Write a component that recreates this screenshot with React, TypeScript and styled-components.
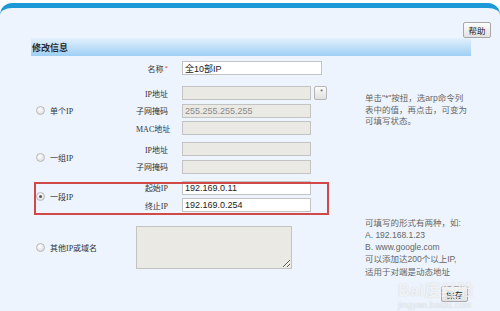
import React from 'react';
import styled, { createGlobalStyle, css } from 'styled-components';

const Global = createGlobalStyle`
  html, body { margin: 0; padding: 0; background: #ffffff; }
  body {
    width: 500px;
    height: 311px;
    overflow: hidden;
    font-family: "Liberation Sans", "Noto Sans CJK SC", sans-serif;
  }
`;

const Panel = styled.div`
  position: relative;
  margin-top: 3px;
  height: 308px;
  box-sizing: border-box;
  background: #edf4fd;
  border-top: 5px solid #1b98d6;
  border-radius: 12px 12px 0 0;
`;

const Toolbar = styled.div`
  display: flex;
  justify-content: flex-end;
  padding: 14px 9px 0 0;
`;

const Btn = styled.button<{ $w: number }>`
  width: ${p => p.$w}px;
  height: 16px;
  padding: 0;
  box-sizing: border-box;
  border: 1px solid #a8a8a8;
  border-radius: 2px;
  background: linear-gradient(#fdfdfd, #e2e2e2);
  font-family: "Noto Sans CJK SC", sans-serif;
  font-size: 8.5px;
  color: #222;
  line-height: 14px;
`;

const SectionBar = styled.div`
  margin: 0 29px 0 31px;
  height: 18px;
  display: flex;
  align-items: center;
  padding-left: 1px;
  background: linear-gradient(#e4f1fc, #9ecff5);
  font-family: "Noto Sans CJK SC", sans-serif;
  font-size: 9px;
  font-weight: 700;
  color: #2a2a2a;
`;

const Form = styled.div`
  display: flex;
  flex-direction: column;
  padding-left: 34px;
`;

const Group = styled.div<{ $mt: number; $highlight?: boolean }>`
  position: relative;
  display: flex;
  align-items: center;
  margin-top: ${p => p.$mt}px;
  ${p =>
    p.$highlight &&
    css`
      &::after {
        content: '';
        position: absolute;
        left: 0;
        top: 1px;
        width: 295px;
        height: 33px;
        box-sizing: border-box;
        border: 2px solid #d04848;
        pointer-events: none;
      }
    `}
`;

const Choice = styled.div`
  width: 102px;
  box-sizing: border-box;
  padding-left: 2px;
  display: flex;
  align-items: center;
  gap: 5px;
  font-size: 8px;
  color: #333;
  font-family: "Liberation Serif", "Noto Sans CJK SC", serif;
`;

const Radio = styled.span<{ $checked?: boolean }>`
  position: relative;
  width: 9px;
  height: 9px;
  box-sizing: border-box;
  border-radius: 50%;
  border: 1px solid #b9b9b9;
  background: radial-gradient(circle at 40% 35%, #ffffff, #d4d4d4);
  ${p =>
    p.$checked &&
    css`
      &::after {
        content: '';
        position: absolute;
        left: 2px;
        top: 2px;
        width: 3px;
        height: 3px;
        border-radius: 50%;
        background: #555;
      }
    `}
`;

const Fields = styled.div`
  width: 229px;
  display: flex;
  flex-direction: column;
  gap: 3.5px;
`;

const FieldRow = styled.div`
  display: flex;
  align-items: center;
`;

const Label = styled.span`
  width: 32px;
  margin-right: 14px;
  text-align: right;
  white-space: nowrap;
  font-family: "Liberation Serif", "Noto Sans CJK SC", serif;
  font-size: 8px;
  color: #333;
`;

const Req = styled.sup`
  color: #e03a3a;
  font-size: 7px;
  margin-left: 1px;
  vertical-align: 2px;
  line-height: 0;
`;

const Input = styled.input<{ $w?: number; $disabled?: boolean }>`
  width: ${p => p.$w ?? 129}px;
  height: 14px;
  margin: 0;
  padding: 0 2px;
  box-sizing: border-box;
  border: 1px solid #c3c3c3;
  background: ${p => (p.$disabled ? '#ebe9e3' : '#ffffff')};
  color: ${p => (p.$disabled ? '#8a8a8a' : '#222')};
  font-family: "Liberation Sans", "Noto Sans CJK SC", sans-serif;
  font-size: 9px;
  outline: none;
`;

const PickBtn = styled.span`
  margin-left: 3px;
  width: 13px;
  height: 14px;
  box-sizing: border-box;
  border: 1px solid #b5b5b5;
  border-radius: 2px;
  background: linear-gradient(#fbfbfb, #e0e0e0);
  display: flex;
  justify-content: flex-end;
  padding: 1px 3px 0 0;
  font-size: 7px;
  line-height: 7px;
  color: #555;
  margin-top: -1px;
`;

const TextArea = styled.textarea`
  width: 156px;
  height: 43px;
  margin: 0;
  box-sizing: border-box;
  border: 1px solid #c3c3c3;
  background: #ebe9e3;
  outline: none;
`;

const Help = styled.div<{ $lh: number }>`
  width: 125px;
  font-family: "Liberation Sans", "Noto Sans CJK SC", sans-serif;
  font-size: 8.5px;
  line-height: ${p => p.$lh}px;
  color: #666;
`;

const Footer = styled.div`
  display: flex;
  justify-content: flex-end;
  padding-right: 32px;
  margin-top: 8px;
`;

const Watermark = styled.div`
  position: absolute;
  left: 398px;
  top: 274px;
  display: flex;
  flex-direction: column;
  align-items: flex-start;
  color: rgba(255, 255, 255, 0.75);
  text-shadow: 0 0 1px rgba(130, 130, 130, 0.4);
  pointer-events: none;
`;

const WmLogo = styled.span`
  font-family: "Liberation Sans", "Noto Sans CJK SC", sans-serif;
  font-weight: 700;
  font-size: 16px;
  line-height: 18px;
  letter-spacing: 0.5px;
`;

const WmUrl = styled.span`
  font-family: "Liberation Sans", sans-serif;
  font-size: 8.5px;
  line-height: 10px;
  letter-spacing: 0.3px;
  color: rgba(255, 255, 255, 0.55);
`;

export default function App() {
  return (
    <>
      <Global />
      <Panel>
        <Toolbar>
          <Btn $w={28}>帮助</Btn>
        </Toolbar>
        <SectionBar>修改信息</SectionBar>
        <Form>
          <Group $mt={5}>
            <Choice />
            <Fields>
              <FieldRow>
                <Label>
                  名称<Req>*</Req>
                </Label>
                <Input $w={140} readOnly value="全10部IP" />
              </FieldRow>
            </Fields>
          </Group>

          <Group $mt={11}>
            <Choice>
              <Radio />
              单个IP
            </Choice>
            <Fields>
              <FieldRow>
                <Label>IP地址</Label>
                <Input $disabled readOnly value="" />
                <PickBtn>*</PickBtn>
              </FieldRow>
              <FieldRow>
                <Label>子网掩码</Label>
                <Input $disabled readOnly value="255.255.255.255" />
              </FieldRow>
              <FieldRow>
                <Label>MAC地址</Label>
                <Input $disabled readOnly value="" />
              </FieldRow>
            </Fields>
            <Help $lh={11.5}>
              单击"*"按扭，选arp命令列
              <br />
              表中的值，再点击，可变为
              <br />
              可填写状态。
            </Help>
          </Group>

          <Group $mt={7}>
            <Choice>
              <Radio />
              一组IP
            </Choice>
            <Fields>
              <FieldRow>
                <Label>IP地址</Label>
                <Input $disabled readOnly value="" />
              </FieldRow>
              <FieldRow>
                <Label>子网掩码</Label>
                <Input $disabled readOnly value="" />
              </FieldRow>
            </Fields>
          </Group>

          <Group $mt={7} $highlight>
            <Choice>
              <Radio $checked />
              一段IP
            </Choice>
            <Fields>
              <FieldRow>
                <Label>起始IP</Label>
                <Input readOnly value="192.169.0.11" />
              </FieldRow>
              <FieldRow>
                <Label>终止IP</Label>
                <Input readOnly value="192.169.0.254" />
              </FieldRow>
            </Fields>
          </Group>

          <Group $mt={4.5}>
            <Choice>
              <Radio />
              其他IP或域名
            </Choice>
            <Fields>
              <TextArea readOnly />
            </Fields>
            <Help $lh={12.3}>
              可填写的形式有两种，如:
              <br />
              A. 192.168.1.23
              <br />
              B. www.google.com
              <br />
              可以添加达200个以上IP,
              <br />
              适用于对端是动态地址
            </Help>
          </Group>

          <Footer>
            <Btn $w={27}>保存</Btn>
          </Footer>
        </Form>
        <Watermark>
          <WmLogo>Bai度经验</WmLogo>
          <WmUrl>jingyan.baidu.com</WmUrl>
        </Watermark>
      </Panel>
    </>
  );
}
